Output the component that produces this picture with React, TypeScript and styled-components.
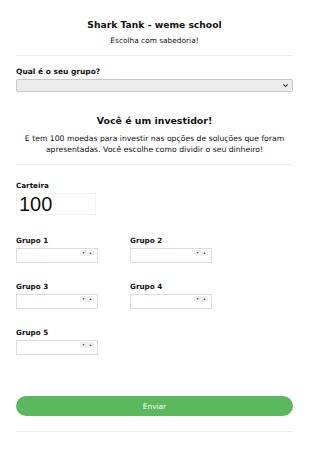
import styled, { createGlobalStyle } from "styled-components";

const GlobalStyle = createGlobalStyle`
  html, body {
    margin: 0;
    padding: 0;
    background: #ffffff;
  }
  body {
    font-family: "DejaVu Sans", Verdana, sans-serif;
    color: #111111;
  }
`;

const GROUPS = ["Grupo 1", "Grupo 2", "Grupo 3", "Grupo 4", "Grupo 5"];

function NumberField({ label }: { label: string }) {
  return (
    <Field>
      <Label>{label}</Label>
      <NumberBox>
        <NumberInput type="text" />
        <Spinner>
          <span>▾</span>
          <span>▴</span>
        </Spinner>
      </NumberBox>
    </Field>
  );
}

export default function App() {
  return (
    <>
      <GlobalStyle />
      <Page>
        <Header>
          <Title>Shark Tank - weme school</Title>
          <Subtitle>Escolha com sabedoria!</Subtitle>
        </Header>
        <Rule />
        <GroupLabel>Qual é o seu grupo?</GroupLabel>
        <Select>
          <span />
          <Chevron viewBox="0 0 8 8">
            <path d="M1.5 2.8 L4 5.2 L6.5 2.8" fill="none" stroke="#333" strokeWidth="1.3" />
          </Chevron>
        </Select>

        <Intro>
          <Heading>Você é um investidor!</Heading>
          <Text>
            E tem 100 moedas para investir nas opções de soluções que foram
            apresentadas. Você escolhe como dividir o seu dinheiro!
          </Text>
        </Intro>
        <Rule />

        <Wallet>
          <Label>Carteira</Label>
          <WalletValue>100</WalletValue>
        </Wallet>

        <Grid>
          {GROUPS.map((g) => (
            <NumberField key={g} label={g} />
          ))}
        </Grid>

        <SubmitButton type="button">Enviar</SubmitButton>
        <Rule />
      </Page>
    </>
  );
}

const Page = styled.div`
  padding: 0 17px 0 16px;
  display: flex;
  flex-direction: column;
`;

const Header = styled.header`
  padding-top: 19px;
  text-align: center;
`;

const Title = styled.h1`
  margin: 0;
  font-size: 9.2px;
  font-weight: bold;
  line-height: 12px;
`;

const Subtitle = styled.p`
  margin: 4px 0 0;
  font-size: 7.4px;
  line-height: 11px;
`;

const Rule = styled.hr`
  width: 100%;
  margin: 9px 0 0;
  border: 0;
  border-top: 1px solid #eeeeee;
`;

const Label = styled.div`
  font-size: 7.2px;
  font-weight: bold;
  line-height: 10px;
`;

const GroupLabel = styled(Label)`
  margin-top: 11px;
  font-size: 7.5px;
`;

const Select = styled.div`
  margin-top: 2px;
  height: 13px;
  border: 1px solid #c8c8c8;
  border-radius: 2px;
  background: #ececec;
  display: flex;
  align-items: center;
  justify-content: space-between;
  padding: 0 3px;
  box-sizing: border-box;
`;

const Chevron = styled.svg`
  width: 7px;
  height: 7px;
`;

const Intro = styled.section`
  margin-top: 22px;
  text-align: center;
`;

const Heading = styled.h2`
  margin: 0;
  font-size: 9.4px;
  font-weight: bold;
  line-height: 14px;
`;

const Text = styled.p`
  margin: 5px 0 0;
  font-size: 7.7px;
  line-height: 11px;
`;

const Wallet = styled.section`
  margin-top: 16px;
  width: 80px;
`;

const WalletValue = styled.div`
  margin-top: 2px;
  border: 1px solid #f4f4f4;
  font-family: "Liberation Sans", Arial, sans-serif;
  font-size: 20px;
  line-height: 20px;
  padding: 0 2px;
  color: #111;
`;

const Grid = styled.div`
  margin-top: 21px;
  display: grid;
  grid-template-columns: 114px 82px;
  row-gap: 19px;
`;

const Field = styled.div`
  display: flex;
  flex-direction: column;
  gap: 2px;
`;

const NumberBox = styled.div`
  width: 82px;
  height: 15px;
  box-sizing: border-box;
  border: 1px solid #dcdcdc;
  display: flex;
  align-items: flex-start;
  background: #fff;
`;

const NumberInput = styled.input`
  flex: 1;
  min-width: 0;
  border: 0;
  outline: none;
  height: 100%;
  padding: 0;
  background: transparent;
`;

const Spinner = styled.div`
  margin: 1px 3px 0 0;
  width: 14px;
  height: 6px;
  background: #f0f0f0;
  display: flex;
  justify-content: space-around;
  align-items: center;
  font-size: 4px;
  line-height: 1;
  color: #555;
`;

const SubmitButton = styled.button`
  margin-top: 41px;
  height: 20px;
  width: 100%;
  border: 0;
  border-radius: 10px;
  background: #5cb85c;
  color: #f4fff4;
  font-family: "DejaVu Sans", Verdana, sans-serif;
  font-size: 7.4px;
  cursor: pointer;
  & + ${Rule} {
    margin-top: 15px;
  }
`;
